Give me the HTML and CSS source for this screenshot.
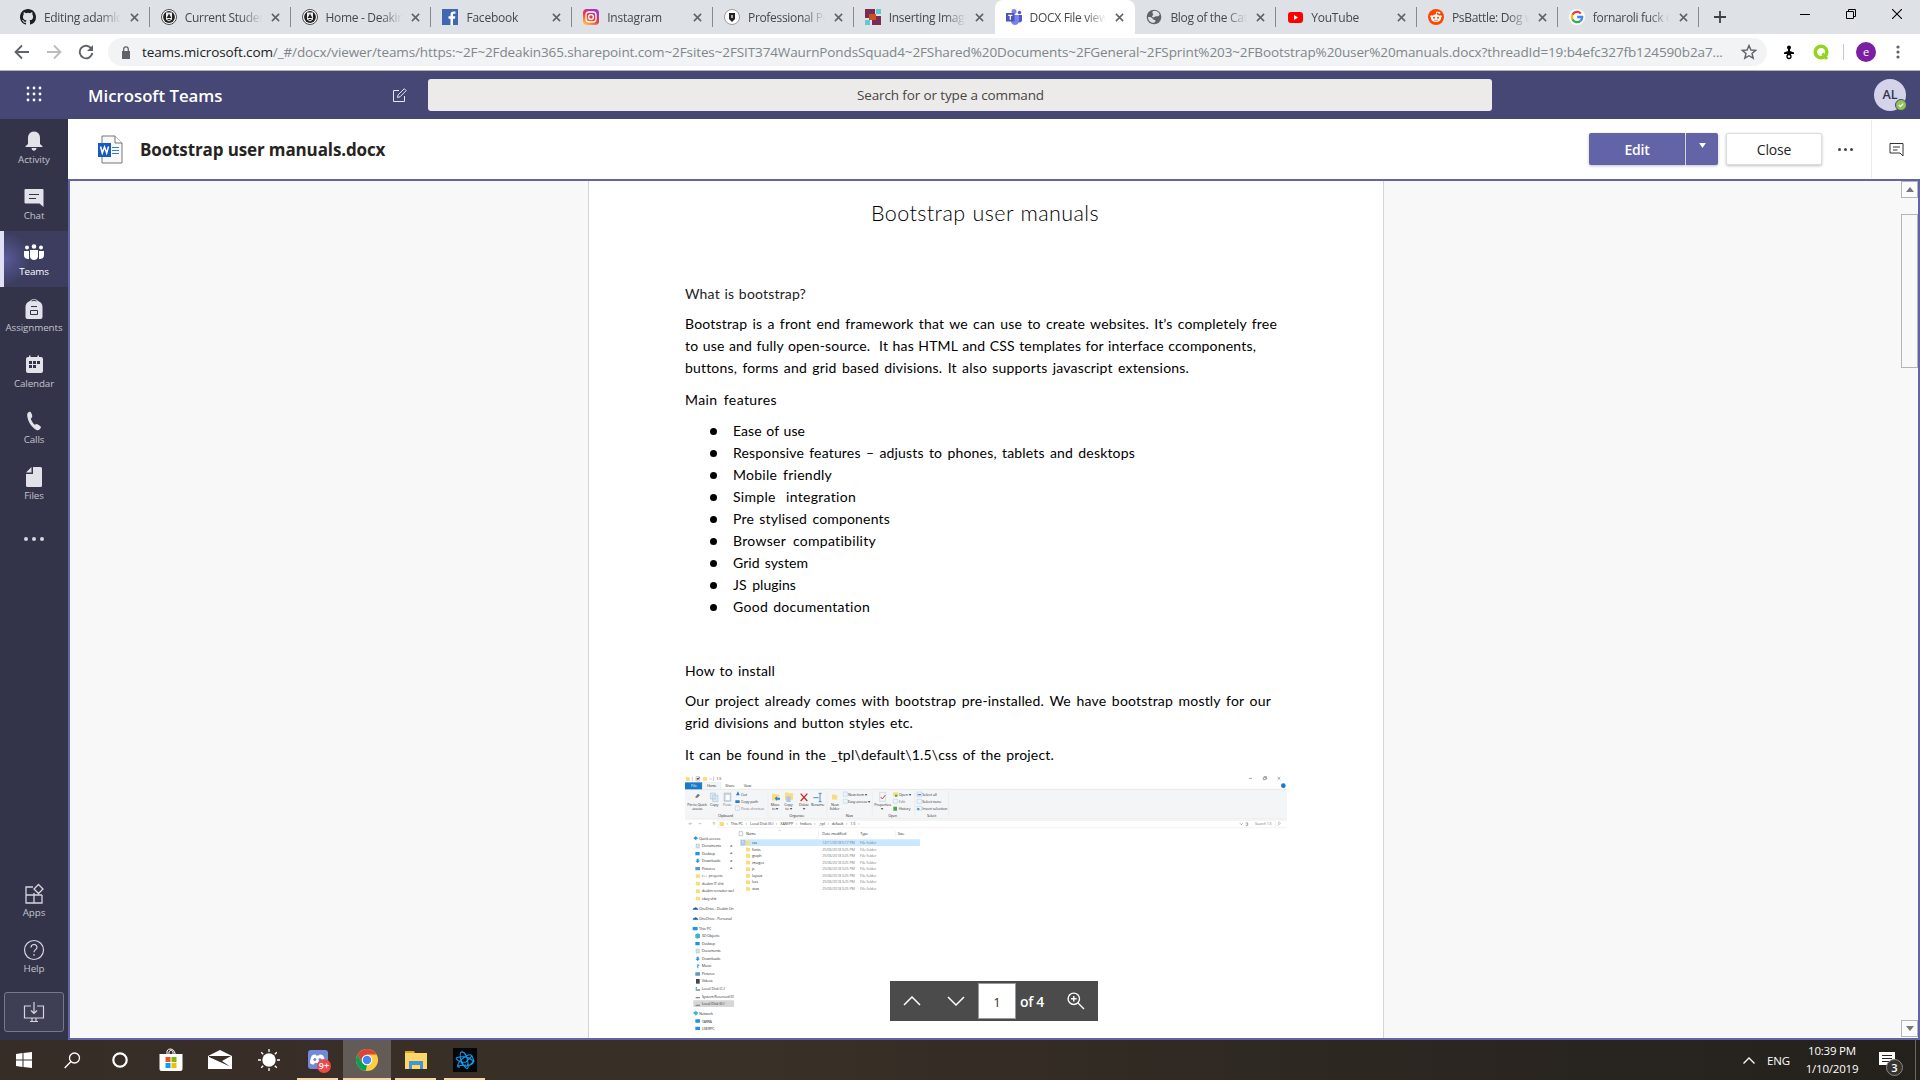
FILE: index.html
```html
<!DOCTYPE html>
<html lang="en">
<head>
<meta charset="utf-8">
<title>DOCX File viewer | Microsoft Teams</title>
<link rel="stylesheet" href="styles.css">
</head>
<body>
<svg width="0" height="0" class="defs">
  <symbol id="x" viewBox="0 0 10 10"><path d="M1 1l8 8M9 1l-8 8" stroke="#5f6368" stroke-width="1.700"/></symbol>
  <symbol id="deakin" viewBox="0 0 16 16"><circle cx="8" cy="8" r="7.500" fill="#fff" stroke="#222" stroke-width=".8"/><circle cx="8" cy="8" r="5.900" fill="#222"/><path d="M5 3.500h6v7l-3 2-3-2z" fill="#eee"/><path d="M8 4.500l2.300 4.500H5.700zM6 10h4l-2 1.500z" fill="#222"/></symbol>
  <symbol id="folder" viewBox="0 0 12 12"><path d="M0 1h5l1 1h6v10H0z" fill="#fbdc7c"/></symbol>
</svg>
<div class="screen">
  <div class="tabs">
    <div class="tab"><svg class="fav" viewBox="0 0 16 16"><path fill="#1b1f23" d="M8 0C3.580 0 0 3.580 0 8c0 3.540 2.290 6.530 5.470 7.590.4.070.55-.17.55-.38v-1.490c-2.010.37-2.530-.49-2.690-.94-.09-.23-.48-.94-.82-1.130-.28-.15-.68-.52-.01-.53.63-.01 1.080.58 1.230.82.720 1.210 1.870.87 2.330.66.070-.52.280-.87.510-1.070-1.780-.2-3.640-.89-3.640-3.950 0-.87.310-1.590.82-2.150-.08-.2-.36-1.020.08-2.120 0 0 .67-.21 2.200.82a7.400 7.400 0 0 1 4 0c1.530-1.040 2.200-.82 2.200-.82.440 1.100.160 1.920.080 2.120.51.560.82 1.270.82 2.150 0 3.070-1.870 3.750-3.650 3.950.29.250.54.730.54 1.480v2.200c0 .21.150.46.550.38A8 8 0 0 0 16 8c0-4.420-3.580-8-8-8z"/></svg><span>Editing adamlo</span><svg class="x"><use href="#x"/></svg></div>
    <div class="tab"><svg class="fav"><use href="#deakin"/></svg><span>Current Studen</span><svg class="x"><use href="#x"/></svg></div>
    <div class="tab"><svg class="fav"><use href="#deakin"/></svg><span>Home - Deakin</span><svg class="x"><use href="#x"/></svg></div>
    <div class="tab"><svg class="fav" viewBox="0 0 16 16"><path fill="#4267b2" d="M0 0h16v16H0z"/><path fill="#fff" d="M8.500 16V9.800H6.500V7.300h2V5.500c0-2 1.200-3.100 3-3.100l1.900.1v2.200h-1.300c-1 0-1.100.5-1.100 1.200v1.400h2.300l-.3 2.500h-2V16z"/></svg><span class="full">Facebook</span><svg class="x"><use href="#x"/></svg></div>
    <div class="tab"><svg class="fav" viewBox="0 0 16 16"><defs><linearGradient id="ig" x1="0.200" y1="1" x2="0.800" y2="0"><stop offset="0" stop-color="#fdc447"/><stop offset=".45" stop-color="#f3393d"/><stop offset="1" stop-color="#8f35d6"/></linearGradient></defs><rect width="16" height="16" rx="4" fill="url(#ig)"/><rect x="3" y="3" width="10" height="10" rx="3" fill="none" stroke="#fff" stroke-width="1.300"/><circle cx="8" cy="8" r="2.400" fill="none" stroke="#fff" stroke-width="1.300"/></svg><span class="full">Instagram</span><svg class="x"><use href="#x"/></svg></div>
    <div class="tab"><svg class="fav" viewBox="0 0 16 16"><circle cx="8" cy="8" r="7.500" fill="#fff" stroke="#888" stroke-width=".8"/><path d="M5 4h6v6l-3 3-3-3z" fill="#222"/><path d="M7 6h2v3H7z" fill="#aaa"/></svg><span>Professional Po</span><svg class="x"><use href="#x"/></svg></div>
    <div class="tab last"><svg class="fav" viewBox="0 0 16 16"><path fill="#7b2a54" d="M0 0h10v9H0zM7 7h9v9H7z"/><path fill="#63c9d0" d="M11 0h5v5h-5zM0 11h5v5H0z"/><path fill="#c9531f" d="M4 5h7v6H4z"/></svg><span>Inserting Image</span><svg class="x"><use href="#x"/></svg></div>
    <div class="tab active"><svg class="fav" viewBox="0 0 16 16"><circle cx="8" cy="2.500" r="2.500" fill="#7b83eb"/><circle cx="13.500" cy="3.500" r="1.700" fill="#5059c9"/><path fill="#5059c9" d="M11 6h5v5c0 2-2 3-4 2z"/><path fill="#7b83eb" d="M5 6h8v6c0 5-7 5-8 1z"/><path fill="#4b53bc" d="M0 4h8.500v8.500H0z"/><path stroke="#fff" stroke-width="1.300" fill="none" d="M2.200 6.300h4.200M4.300 6.300v4.500"/></svg><span>DOCX File viewe</span><svg class="x"><use href="#x"/></svg></div>
    <div class="tab"><svg class="fav" viewBox="0 0 16 16"><circle cx="8" cy="8" r="7.300" fill="#5f6368"/><path fill="#dee1e6" d="M8 1.800c3 .1 5 1.500 5.700 4C12 8 11 7 9.500 7.500S8 9 6.500 8 8 6 7 5 6 2 8 1.800zM2 8c2-.3 4 .2 5 2 .8 1.600 3 .5 2.500 2C9 14 7 14 5.500 13.600 3 12.500 2 10 2 8z"/></svg><span>Blog of the Cat</span><svg class="x"><use href="#x"/></svg></div>
    <div class="tab"><svg class="fav" viewBox="0 0 16 16"><rect x="1" y="3" width="15" height="11" rx="3" fill="#f00"/><path fill="#fff" d="M7 6l4 2.500L7 11z"/></svg><span class="full">YouTube</span><svg class="x"><use href="#x"/></svg></div>
    <div class="tab"><svg class="fav" viewBox="0 0 16 16"><circle cx="8" cy="8" r="8" fill="#ff4500"/><ellipse cx="8" cy="9.300" rx="5" ry="3.700" fill="#fff"/><circle cx="3.500" cy="7.500" r="1.200" fill="#fff"/><circle cx="12.500" cy="7.500" r="1.200" fill="#fff"/><path stroke="#fff" fill="none" d="M8 6l.7-3 2.300.5"/><circle cx="11.300" cy="3.700" r="1" fill="#fff"/><circle cx="6" cy="8.700" r="1" fill="#ff4500"/><circle cx="10" cy="8.700" r="1" fill="#ff4500"/><path stroke="#ff4500" stroke-width=".7" fill="none" d="M6 11q2 1 4 0"/></svg><span>PsBattle: Dog w</span><svg class="x"><use href="#x"/></svg></div>
    <div class="tab"><svg class="fav" viewBox="0 0 16 16"><circle cx="8" cy="8" r="8" fill="#fff"/><g fill="none" stroke-width="2.300"><path stroke="#ea4335" d="M3.400 5.700A5.200 5.200 0 0 1 11.800 4.500"/><path stroke="#fbbc05" d="M3.400 10.300a5.200 5.200 0 0 1 0-4.600"/><path stroke="#34a853" d="M11.500 11.900a5.200 5.200 0 0 1-8.100-1.600"/><path stroke="#4285f4" d="M8.200 8h5a5.200 5.200 0 0 1-1.700 3.900"/></g></svg><span>fornaroli fuck o</span><svg class="x"><use href="#x"/></svg></div>
    <svg class="plus" viewBox="0 0 12 12"><path d="M6 0v12M0 6h12" stroke="#3c4043" stroke-width="1.800"/></svg>
    <div class="winctl">
      <svg viewBox="0 0 10 10"><path d="M0 5.500h10" stroke="#000"/></svg>
      <svg viewBox="0 0 10 10"><path d="M.5 2.500h7v7h-7zM2.500 2.500v-2h7v7h-2" fill="none" stroke="#000"/></svg>
      <svg viewBox="0 0 10 10"><path d="M0 0l10 10M10 0L0 10" stroke="#000" stroke-width="1.100"/></svg>
    </div>
  </div>

  <div class="toolbar">
    <div class="nav">
      <svg viewBox="0 0 16 16"><path d="M15 8H2M8 1.500L1.500 8 8 14.500" fill="none" stroke="#5f6368" stroke-width="1.800"/></svg>
      <svg viewBox="0 0 16 16"><path d="M1 8h13M8 1.500L14.500 8 8 14.500" fill="none" stroke="#babcbe" stroke-width="1.800"/></svg>
      <svg viewBox="0 0 16 16"><path d="M13.300 4.500A6.300 6.300 0 1 0 14.300 9" fill="none" stroke="#5f6368" stroke-width="1.900"/><path d="M15 1v6H9z" fill="#5f6368"/></svg>
    </div>
    <div class="omni">
      <svg class="lock" viewBox="0 0 10 13"><path d="M1 5h8v8H1z" fill="#5f6368"/><path d="M2.700 5V3.200a2.300 2.300 0 0 1 4.600 0V5" fill="none" stroke="#5f6368" stroke-width="1.300"/></svg>
      <span class="url"><b>teams.microsoft.com</b>/_#/docx/viewer/teams/https:~2F~2Fdeakin365.sharepoint.com~2Fsites~2FSIT374WaurnPondsSquad4~2FShared%20Documents~2FGeneral~2FSprint%203~2FBootstrap%20user%20manuals.docx?threadId=19:b4efc327fb124590b2a7...</span>
      <svg class="star" viewBox="0 0 16 16"><path d="M8 1.500l1.900 4.500 4.800.4-3.700 3.100 1.200 4.700L8 11.700l-4.200 2.500L5 9.500 1.300 6.400 6.100 6z" fill="none" stroke="#5f6368" stroke-width="1.400"/></svg>
    </div>
    <div class="ext">
      <svg class="e1" viewBox="0 0 12 16"><circle cx="6" cy="3.500" r="2"/><path d="M5 5h2v2l4 1.500v1.500H8v1H4v-1H1V8.500L5 7z"/><circle cx="6" cy="12.500" r="2" fill="none" stroke="#000" stroke-width="1.300"/></svg>
      <svg class="e2" viewBox="0 0 16 16"><circle cx="8" cy="8" r="5.800" fill="none" stroke="#94d41f" stroke-width="3.600"/><path d="M9.500 9.500L14 15" stroke="#94d41f" stroke-width="3"/></svg>
      <i class="sep"></i><span class="me">e</span>
      <svg class="e3" viewBox="0 0 4 14"><g fill="#5f6368"><circle cx="2" cy="2" r="1.600"/><circle cx="2" cy="7" r="1.600"/><circle cx="2" cy="12" r="1.600"/></g></svg>
    </div>
  </div>

  <header class="app">
    <svg class="waffle" viewBox="0 0 16 16"><g fill="#fff"><circle cx="2" cy="2" r="1.400"/><circle cx="8" cy="2" r="1.400"/><circle cx="14" cy="2" r="1.400"/><circle cx="2" cy="8" r="1.400"/><circle cx="8" cy="8" r="1.400"/><circle cx="14" cy="8" r="1.400"/><circle cx="2" cy="14" r="1.400"/><circle cx="8" cy="14" r="1.400"/><circle cx="14" cy="14" r="1.400"/></g></svg>
    <span class="brand">Microsoft Teams</span>
    <svg class="compose" viewBox="0 0 15 15"><path d="M7 2.500H1.500v11h11V8M5.500 9.500l.6-2.600L12.300.7l1.900 1.900L8 8.800z" fill="none" stroke="#e6e6f0"/></svg>
    <div class="search"><span>Search for or type a command</span></div>
    <div class="avatar">AL<svg viewBox="0 0 12 12"><circle cx="6" cy="6" r="5.500" fill="#92c353" stroke="#464775"/><path d="M3.800 6l1.600 1.600 2.800-3" fill="none" stroke="#fff" stroke-width="1.200"/></svg></div>
  </header>

  <div class="main">
    <nav class="rail">
      <div class="item"><svg viewBox="0 0 22 22"><path fill="#e2e2ea" d="M11 1.500c4 0 6 3 6 6.500v6l2.500 2.200v.8h-17v-.8L5 14V8c0-3.500 2-6.500 6-6.500zM8.500 18h5c-.3 3.500-4.700 3.500-5 0z"/></svg><span>Activity</span></div>
      <div class="item"><svg viewBox="0 0 22 22"><path fill="#e2e2ea" d="M2.500 3h17a1 1 0 0 1 1 1v17l-4-3.500H2.500a1 1 0 0 1-1-1V4a1 1 0 0 1 1-1z"/><path stroke="#33344a" d="M6 8.500h10M6 12.500h7"/></svg><span>Chat</span></div>
      <div class="item on"><svg viewBox="0 0 22 22"><g fill="#fff"><circle cx="4" cy="5.500" r="2"/><circle cx="11" cy="4.500" r="2.300"/><circle cx="18" cy="5.500" r="2"/><path d="M1 9h5v8c-3 0-5-1-5-4zM16 9h5v4c0 3-2 4-5 4zM7 8h8v6.500c0 4.500-8 4.500-8 0z"/></g></svg><span>Teams</span></div>
      <div class="item"><svg viewBox="0 0 22 22"><path fill="#e2e2ea" d="M7 3c1-2.500 7-2.500 8 0 3 1 4.500 3 4.500 6v10a2 2 0 0 1-2 2h-13a2 2 0 0 1-2-2V9c0-3 1.500-5 4.500-6z"/><path fill="none" stroke="#33344a" d="M8 8.500h6M7.500 12.500h7v4h-7zM8.500 3q2.500-1.500 5 0"/></svg><span>Assignments</span></div>
      <div class="item"><svg viewBox="0 0 22 22"><path fill="#e2e2ea" d="M6 1.500h1.500V3h7V1.500H16V3h2a2 2 0 0 1 2 2v12a2 2 0 0 1-2 2H5a2 2 0 0 1-2-2V5a2 2 0 0 1 2-2h1z"/><path fill="#33344a" d="M6 7h3v3H6zM10 7h3v3h-3zM14 7h3v3h-3zM6 11h3v3H6zM10 11h3v3h-3z"/></svg><span>Calendar</span></div>
      <div class="item"><svg viewBox="0 0 22 22"><path fill="#e2e2ea" d="M7.500 2c1 1 2 3 1.700 5L7.800 8.700c.9 2.500 2 4.300 3.800 6l2.100-.7c1.600.5 3.200 1.500 4.300 3-.4 2.500-2.500 3.700-4.500 3C8 17 4 10 4.200 4.500 4.500 2.500 6 1.500 7.500 2z"/></svg><span>Calls</span></div>
      <div class="item"><svg viewBox="0 0 22 22"><path fill="#e2e2ea" d="M10 1h7.500a1.500 1.500 0 0 1 1.500 1.500v17a1.500 1.500 0 0 1-1.500 1.500h-13A1.500 1.500 0 0 1 3 19.500V8h7zM3 6.500L8.500 1v5.500z"/></svg><span>Files</span></div>
      <div class="more"><i></i><i></i><i></i></div>
      <div class="bottom">
        <div class="item"><svg viewBox="0 0 22 22"><path fill="none" stroke="#d5d5de" stroke-width="1.300" d="M10 4H3v16h16v-8M3 12h16M11 10v10M15.500 1.500l4.500 4.500-4.500 4.500L11 6z"/></svg><span>Apps</span></div>
        <div class="item"><svg viewBox="0 0 22 22"><circle cx="11" cy="11" r="9.500" fill="none" stroke="#d5d5de" stroke-width="1.200"/><path fill="none" stroke="#d5d5de" stroke-width="1.200" d="M8 8.500c0-4 6-4 6-.2 0 2.500-3 2.200-3 5M11 15v1.700"/></svg><span>Help</span></div>
        <div class="download"><svg viewBox="0 0 22 22"><path fill="none" stroke="#d5d5de" stroke-width="1.200" d="M8 5H1.500v12h19V5H14M11 1v11M8 9.500l3 3 3-3M9 17v3M13 17v3M7 20.500h8"/></svg></div>
      </div>
    </nav>

    <section class="work">
      <div class="filebar">
        <svg class="word" viewBox="0 0 26 29"><path fill="#f8f8f8" stroke="#777" d="M5 1h13l7 7v20H5z"/><path fill="#fff" stroke="#777" d="M18 1v7h7"/><path stroke="#2b7cd3" d="M15 12.500h7M15 15.500h7M15 18.500h7"/><path fill="#185abd" d="M1 8h13v14H1z"/><path fill="none" stroke="#fff" stroke-width="1.500" d="M3.500 11.500L5.300 18l2.200-6 2.200 6 1.800-6.500"/></svg>
        <h1>Bootstrap user manuals.docx</h1>
        <div class="actions">
          <button class="edit">Edit</button><button class="drop"><svg viewBox="0 0 8 6"><path fill="#fff" d="M0 0h8L4 6z"/></svg></button>
          <button class="close">Close</button>
          <div class="dots"><i></i><i></i><i></i></div>
          <div class="comment"><svg viewBox="0 0 15 15"><path fill="none" stroke="#333" d="M1 1.500h13V14l-3-3H1zM4 5h7M4 8h4.500"/></svg></div>
        </div>
      </div>

      <div class="viewer">
        <article class="page">
          <h2><span class="ln w227">Bootstrap user manuals</span></h2>
          <p class="l what"><span class="ln w120">What is bootstrap?</span></p>
          <p class="l p1"><span class="ln w592">Bootstrap is a front end framework that we can use to create websites. It’s completely free</span></p>
          <p class="l"><span class="ln w571">to use and fully open-source.&nbsp; It has HTML and CSS templates for interface ccomponents,</span></p>
          <p class="l"><span class="ln w503">buttons, forms and grid based divisions. It also supports javascript extensions.</span></p>
          <p class="l p2"><span class="ln w91">Main features</span></p>
          <ul>
            <li><span class="ln w72">Ease of use</span></li>
            <li><span class="ln w401">Responsive features – adjusts to phones, tablets and desktops</span></li>
            <li><span class="ln w99">Mobile friendly</span></li>
            <li><span class="ln w123">Simple integration</span></li>
            <li><span class="ln w157">Pre stylised components</span></li>
            <li><span class="ln w143">Browser compatibility</span></li>
            <li><span class="ln w75">Grid system</span></li>
            <li><span class="ln w62">JS plugins</span></li>
            <li><span class="ln w137">Good documentation</span></li>
          </ul>
          <p class="l how"><span class="ln w90">How to install</span></p>
          <p class="l p1"><span class="ln w585">Our project already comes with bootstrap pre-installed. We have bootstrap mostly for our</span></p>
          <p class="l"><span class="ln w228">grid divisions and button styles etc.</span></p>
          <p class="l p2"><span class="ln w369">It can be found in the _tpl\default\1.5\css of the project.</span></p>

          <svg class="shot" viewBox="15 15 1806 789">
            <path fill="#f4f5f7" d="M15 61h1806v89H15z"/><path stroke="#e3e4e6" stroke-width="2" d="M15 61h1806M15 150h1806"/>
            <path fill="#1979ca" d="M15 40h52v21H15z"/><path fill="#f4f5f7" stroke="#dedfe1" d="M67 40h56v22H67z"/>
            <use href="#folder" x="17" y="22" width="13" height="14"/><use href="#folder" x="69" y="22" width="13" height="14"/>
            <path stroke="#999" stroke-width="1.500" fill="none" d="M37 23v13M48 23h11v13H48zM101 23v13M88 28l4 4 4-4"/><path stroke="#d84b2b" stroke-width="2" d="M50 29l3 4 6-8"/>
            <g class="t">
              <text x="109" y="33" textLength="15">1.5</text><text x="33" y="55" class="w" textLength="18">File</text><text x="81" y="55" textLength="28">Home</text><text x="136" y="55" textLength="28">Share</text><text x="191" y="55" textLength="23">View</text>
              <text x="22" y="111" textLength="59">Pin to Quick</text><text x="37" y="124" textLength="30">access</text><text x="90" y="111" textLength="25">Copy</text><text x="129" y="111" textLength="26" class="g">Paste</text>
              <text x="183" y="80" textLength="18">Cut</text><text x="183" y="101" textLength="51">Copy path</text><text x="183" y="122" textLength="69" class="g">Paste shortcut</text><text x="114" y="143" textLength="45">Clipboard</text>
              <text x="272" y="111" textLength="27">Move</text><text x="276" y="124" textLength="19">to ▾</text><text x="313" y="111" textLength="25">Copy</text><text x="316" y="124" textLength="19">to ▾</text><text x="357" y="111" textLength="30">Delete</text><text x="368" y="124">▾</text><text x="393" y="111" textLength="40">Rename</text><text x="328" y="143" textLength="45">Organize</text>
              <text x="453" y="111" textLength="23">New</text><text x="449" y="124" textLength="30">folder</text><text x="504" y="80" textLength="56">New item ▾</text><text x="504" y="101" textLength="65">Easy access ▾</text><text x="497" y="143" textLength="22">New</text>
              <text x="583" y="111" textLength="50">Properties</text><text x="604" y="124">▾</text><text x="656" y="80" textLength="37">Open ▾</text><text x="656" y="101" textLength="19" class="g">Edit</text><text x="656" y="122" textLength="35">History</text><text x="625" y="143" textLength="26">Open</text>
              <text x="727" y="80" textLength="43">Select all</text><text x="727" y="101" textLength="57">Select none</text><text x="727" y="122" textLength="75">Invert selection</text><text x="741" y="143" textLength="28">Select</text>
              <text x="140" y="168">›</text><text x="152" y="168" textLength="37">This PC</text><text x="197" y="168">›</text><text x="210" y="168" textLength="70">Local Disk (E:)</text><text x="288" y="168">›</text><text x="301" y="168" textLength="39">XAMPP</text><text x="348" y="168">›</text><text x="360" y="168" textLength="35">htdocs</text><text x="403" y="168">›</text><text x="416" y="168" textLength="19">_tpl</text><text x="443" y="168">›</text><text x="455" y="168" textLength="35">default</text><text x="498" y="168">›</text><text x="511" y="168" textLength="15">1.5</text><text x="535" y="168">›</text><text x="1725" y="168" textLength="50" class="g">Search 1.5</text>
              <text x="57" y="212" textLength="64">Quick access</text><text x="65" y="234" textLength="58">Documents</text><text x="65" y="257" textLength="40">Desktop</text><text x="65" y="279" textLength="56">Downloads</text><text x="65" y="302" textLength="40">Pictures</text><text x="65" y="325" textLength="63">c++ projects</text><text x="65" y="347" textLength="66">deakin IT shit</text><text x="65" y="370" textLength="97">deakin recruiter wel</text><text x="65" y="392" textLength="44">ebay shit</text><text x="57" y="423" textLength="104">OneDrive - Deakin Un</text><text x="57" y="453" textLength="98">OneDrive - Personal</text><text x="57" y="483" textLength="37">This PC</text><text x="65" y="505" textLength="53">3D Objects</text><text x="65" y="528" textLength="40">Desktop</text><text x="65" y="550" textLength="57">Documents</text><text x="65" y="573" textLength="56">Downloads</text><text x="65" y="595" textLength="30">Music</text><text x="65" y="618" textLength="39">Pictures</text><text x="65" y="640" textLength="33">Videos</text><text x="65" y="663" textLength="70">Local Disk (C:)</text><text x="65" y="686" textLength="97">System Reserved (D</text>
            </g>
            <path fill="#d6d6d6" d="M40 694h122v20H40z"/>
            <g class="t"><text x="65" y="709" textLength="68">Local Disk (E:)</text><text x="57" y="738" textLength="42">Network</text><text x="65" y="761" textLength="31">TARRA</text><text x="65" y="783" textLength="39">USERPC</text></g>
            <path fill="#cce8ff" d="M180 211h540v20H180z"/>
            <g class="t">
              <text x="198" y="198" textLength="30">Name</text><text x="427" y="198" textLength="72">Date modified</text><text x="541" y="198" textLength="23">Type</text><text x="653" y="198" textLength="20">Size</text>
              <text x="216" y="225" textLength="15">css</text><text x="216" y="245" textLength="26">fonts</text><text x="216" y="264" textLength="29">graph</text><text x="216" y="284" textLength="36">images</text><text x="216" y="304" textLength="7">js</text><text x="216" y="324" textLength="31">layout</text><text x="216" y="343" textLength="18">less</text><text x="216" y="363" textLength="21">view</text>
              <g class="g"><text x="427" y="225" textLength="98">12/11/2018 5:17 PM</text><text x="427" y="245" textLength="98">25/06/2018 3:25 PM</text><text x="427" y="264" textLength="98">25/06/2018 3:25 PM</text><text x="427" y="284" textLength="98">25/06/2018 3:25 PM</text><text x="427" y="304" textLength="98">25/06/2018 3:25 PM</text><text x="427" y="324" textLength="98">25/06/2018 3:25 PM</text><text x="427" y="343" textLength="98">25/06/2018 3:25 PM</text><text x="427" y="363" textLength="98">25/06/2018 3:25 PM</text>
              <text x="540" y="225" textLength="50">File folder</text><text x="540" y="245" textLength="50">File folder</text><text x="540" y="264" textLength="50">File folder</text><text x="540" y="284" textLength="50">File folder</text><text x="540" y="304" textLength="50">File folder</text><text x="540" y="324" textLength="50">File folder</text><text x="540" y="343" textLength="50">File folder</text><text x="540" y="363" textLength="50">File folder</text></g>
            </g>
            <g fill="none" stroke="#999" stroke-width="1.500"><path d="M177 188h11v12h-11zM184 215h11v12h-11zM186 221l3 3 5-7M27 164h10M31 160l-4 4 4 4M56 164h9M102 169v-9M98 164l4-4 4 4M296 185l3-2 3 2"/><path stroke="#e4e4e4" d="M114 154h1672v22H114zM1796 154h94v22h-94zM415 184v20M534 184v20M646 184v20M720 184v20M264 66v78M441 66v78M577 66v78M704 66v78M806 66v78"/></g>
            <path stroke="#777" stroke-width="2" fill="none" d="M1707 28h9M1750 25h8v7h-8zM1752 23h8v7M1793 24l8 8M1801 24l-8 8M1680 163l4 4 4-4M1697 162h6v7h-6"/><circle cx="1810" cy="50" r="7" fill="#1979ca"/><circle cx="1798" cy="163" r="3" fill="none" stroke="#777"/><path stroke="#777" d="M1796 166l-4 4"/>
            <path fill="#777" d="M45 85l9-11 6 5-9 8zM150 231l5-3 3 3-6 3zM150 253l5-3 3 3-6 3zM150 276l5-3 3 3-6 3zM150 298l5-3 3 3-6 3z"/>
            <path fill="#d7e8f7" stroke="#8aa9c6" d="M91 72h15v18H91zM98 78h16v20H98z"/><path fill="#c9d6e4" stroke="#8e9fb3" d="M132 72h21v25h-21z"/><path fill="#fff" d="M137 78h12v15h-12z"/>
            <path fill="#2a7dc4" d="M168 79l6-12 5 12zM166 94h13v8h-13z"/><path fill="none" stroke="#9ab" d="M166 111h12v13h-12z"/>
            <use href="#folder" x="276" y="70" width="22" height="27"/><path fill="#2a86d0" d="M284 88l7-6v4h9v6h-9v4z"/><use href="#folder" x="315" y="68" width="24" height="25"/><path fill="#a9cbe8" d="M319 82h13v17h-13z"/>
            <path stroke="#d7261e" stroke-width="4" d="M362 74l20 22M382 74l-20 22"/><path stroke="#4e8dc5" stroke-width="3" fill="none" d="M400 86h16M420 73v25M416 73h9M416 98h9"/><use href="#folder" x="456" y="70" width="16" height="27"/>
            <path fill="#f0f5fa" stroke="#8eb3d5" d="M490 69h12v13h-12zM490 91h12v12h-12zM599 70h18v27h-18zM711 69h14v14h-14zM711 91h14v12h-14zM711 112h14v12h-14zM640 91h12v12h-12z"/><path stroke="#d84b2b" stroke-width="3" fill="none" d="M602 84l5 6 9-12"/><path fill="#3e92d9" d="M713 75h10v4h-10zM712 117h6v6h-6z"/><path fill="#fbdc7c" d="M639 70h15v12h-15z"/><path fill="#48a94b" d="M645 77h7v6h-7zM640 113h11v12h-11z"/>
            <use href="#folder" x="118" y="156" width="14" height="16"/>
            <use href="#folder" x="198" y="214" width="13" height="14"/><use href="#folder" x="198" y="234" width="13" height="14"/><use href="#folder" x="198" y="253" width="13" height="14"/><use href="#folder" x="198" y="273" width="13" height="14"/><use href="#folder" x="198" y="293" width="13" height="14"/><use href="#folder" x="198" y="313" width="13" height="14"/><use href="#folder" x="198" y="332" width="13" height="14"/><use href="#folder" x="198" y="352" width="13" height="14"/>
            <use href="#folder" x="47" y="314" width="13" height="14"/><use href="#folder" x="47" y="336" width="13" height="14"/><use href="#folder" x="47" y="359" width="13" height="14"/><use href="#folder" x="47" y="381" width="13" height="14"/>
            <g fill="#2195e3"><path d="M40 208l7-6 7 6-7 5zM46 249h13v10H46zM46 519h13v10H46zM38 474h15v10H38zM50 269h6v6h4l-7 7-7-7h4zM50 563h6v6h4l-7 7-7-7h4zM52 586h3l4 5-4-1v8h-3z"/><path fill="#0a64b5" d="M38 422q0-5 5-5 4-5 8 1 4 0 4 4zM38 452q0-5 5-5 4-5 8 1 4 0 4 4z"/><path fill="#41b1cf" d="M46 496l7-3 7 3v10l-7 3-7-3zM39 731l8-5 8 5-7 9z"/><path d="M46 751h14v10H46zM46 773h14v10H46z"/></g>
            <path fill="#cfe2f1" stroke="#8aa9c6" d="M48 225h10v12H48zM48 540h10v12H48z"/><path fill="#5d98c4" d="M46 294h14v10H46zM46 610h14v10H46z"/><path fill="#444" d="M48 630h11v14H48z"/><path fill="#888" d="M47 661h13v4H47zM47 684h13v4H47zM47 707h13v4H47z"/><path fill="#30a6d8" d="M47 654h4v5h-4z"/>
          </svg>
        </article>

        <div class="pager">
          <svg class="chev" viewBox="0 0 18 10"><path d="M1 9l8-8 8 8" fill="none" stroke="#fff" stroke-width="1.500"/></svg>
          <svg class="chev" viewBox="0 0 18 10"><path d="M1 1l8 8 8-8" fill="none" stroke="#fff" stroke-width="1.500"/></svg>
          <span class="num">1</span><span class="of">of 4</span>
          <svg class="zoom" viewBox="0 0 18 18"><circle cx="6.800" cy="6.800" r="5.700" fill="none" stroke="#fff" stroke-width="1.400"/><path d="M11 11l6 6M4 6.800h5.600M6.800 4v5.600" stroke="#fff" stroke-width="1.400"/></svg>
        </div>

        <div class="scroll">
          <div class="sb"><svg viewBox="0 0 8 5"><path fill="#777" d="M0 5h8L4 0z"/></svg></div>
          <div class="thumb"></div>
          <div class="sb end"><svg viewBox="0 0 8 5"><path fill="#777" d="M0 0h8L4 5z"/></svg></div>
        </div>
      </div>
    </section>
  </div>

  <footer class="taskbar">
    <div class="sys"><svg width="16" height="16" viewBox="0 0 16 16"><path fill="#fff" d="M0 2l6.500-1v6.500H0zM7.500.9L16 0v7.500H7.500zM0 8.500h6.500V15L0 14zM7.500 8.500H16V16l-8.500-1z"/></svg></div>
    <div class="sys"><svg width="17" height="17" viewBox="0 0 17 17"><circle cx="10.500" cy="6" r="5" fill="none" stroke="#fff" stroke-width="1.300"/><path d="M7 9.500L.7 16" stroke="#fff" stroke-width="1.400"/></svg></div>
    <div class="sys"><svg width="16" height="16" viewBox="0 0 16 16"><circle cx="8" cy="8" r="6.700" fill="none" stroke="#fff" stroke-width="2.200"/></svg></div>
    <div class="tk first"><svg width="24" height="24" viewBox="0 0 24 24"><path d="M8 7V3q1-2.500 4-2t4 4v2M10 7V4q2-4 4 0v3" fill="none" stroke="#fff"/><path d="M.5 6h23v15q0 2-2 2H2.500q-2 0-2-2z" fill="#fff"/><path fill="#f25022" d="M6.500 9h5v5h-5z"/><path fill="#7fba00" d="M12.500 9h5v5h-5z"/><path fill="#00a4ef" d="M6.500 15h5v5h-5z"/><path fill="#ffb900" d="M12.500 15h5v5h-5z"/></svg></div>
    <div class="tk"><svg width="24" height="20" viewBox="0 0 24 20"><path d="M0 6l12-6 12 6v13H0z" fill="#fff"/><path d="M1 6h22l-9 5 8 5.500L1 7z" fill="#383028"/></svg></div>
    <div class="tk"><svg width="24" height="24" viewBox="0 0 24 24"><circle cx="12" cy="12" r="6.700" fill="#fff"/><path d="M12 1v3M12 20v3M1 12h3M20 12h3M4.200 4.200l2 2M17.800 17.800l2 2M19.800 4.200l-2 2M6.200 17.800l-2 2" stroke="#fff" stroke-width="1.300"/></svg></div>
    <div class="tk run"><svg width="24" height="24" viewBox="0 0 24 24"><rect x="2" y="2" width="20" height="19" rx="3" fill="#7289da"/><path d="M4 15c0-3 .8-6 2-7.500 1.500-1 3-1.300 3.500-1l.5 1h3l.5-1c1 0 2.500.3 3.500 1 1.200 1.500 2 4.500 2 7.500-1 1.300-2.500 1.500-3.500 1.500l-1-1.500H9l-1 1.500C6.500 16.500 5 16 4 15z" fill="#fff"/><circle cx="8.800" cy="11.500" r="1.500" fill="#7289da"/><circle cx="14" cy="11.500" r="1.500" fill="#7289da"/></svg><em>9+</em></div>
    <div class="tk run cur"><svg width="24" height="24" viewBox="0 0 24 24"><circle cx="12" cy="12" r="11" fill="#ffcd40"/><path fill="#db4437" d="M2.500 6.500A11 11 0 0 1 21.500 6.500H12L7.200 14.800z"/><path fill="#0f9d58" d="M2.500 6.500l4.700 8.300L12 17.500 10.700 23A11 11 0 0 1 2.500 6.500z"/><circle cx="12" cy="12" r="5.300" fill="#fff"/><circle cx="12" cy="12" r="4.200" fill="#4285f4"/></svg></div>
    <div class="tk run"><svg width="24" height="24" viewBox="0 0 24 24"><path fill="#e8a317" d="M1 3h9l1 2H1z"/><path fill="#ffd766" d="M1 5h22v16H1z"/><path fill="#3e97db" d="M5 13h14v8h-3v-4H8v4H5z"/></svg></div>
    <div class="tk run"><svg width="24" height="24" viewBox="0 0 24 24"><path d="M0 0h24v24H0z" fill="#050608"/><path fill="none" stroke="#0f9cf0" stroke-width="1.100" d="M8 4c4-1 7 6 7 12-1 4-5 2-7-2M8 4c-2 3 0 9 3 14 3 4 5 3 4-3M3 10c5-2 12-2 16 2 3 3 0 5-4 5M3 10c1 3 5 5 10 4l6-6c-2-3-7 0-12 5-3 4-3 7 0 6M19 8l2 5-5 5M4 18l9-1"/></svg></div>
    <div class="tray">
      <svg class="up" viewBox="0 0 12 7"><path d="M.5 6.500L6 1l5.500 5.500" fill="none" stroke="#fff" stroke-width="1.300"/></svg>
      <span class="eng">ENG</span>
      <div class="clock"><span>10:39 PM</span><span>1/10/2019</span></div>
      <div class="note"><svg viewBox="0 0 16 16"><path fill="#fff" d="M0 0h16v13h-4v3l-3-3H0z"/><path stroke="#26221e" d="M3 3.500h10M3 6.500h10M3 9.500h7"/></svg><em>3</em></div>
    </div>
  </footer>
</div>
</body>
</html>
```
FILE: styles.css
```css
* { box-sizing: border-box; }
body { margin: 0; font-family: "Open Sans", "Noto Sans", sans-serif; overflow: hidden; }
svg { display: block; flex: none; }
.defs { position: absolute; }
em, i { font-style: normal; }
.screen { width: 1920px; height: 1080px; display: flex; flex-direction: column; }

/* browser tabs */
.tabs { height: 34px; background: #dee1e6; display: flex; align-items: center; padding-left: 9px; flex: none; }
.tab { width: 140.800px; height: 34px; display: flex; align-items: center; padding-left: 11px; flex: none; }
.tab::after { content: ""; width: 1px; height: 20px; background: #868a90; margin-left: 10px; }
.tab.last::after, .tab.active::after { visibility: hidden; }
.tab.active { background: #fff; border-radius: 8px 8px 0 0; }
.fav { width: 16px; height: 16px; }
.tab span { width: 78px; margin-left: 8px; font-size: 12px; letter-spacing: -.32px; color: #45494d; white-space: nowrap; overflow: hidden; -webkit-mask-image: linear-gradient(90deg, #000 72%, transparent); mask-image: linear-gradient(90deg, #000 72%, transparent); }
.tab span.full { letter-spacing: -.2px; }
.x { width: 9px; height: 9px; margin-left: 9px; }
.plus { width: 12px; height: 12px; margin-left: 15px; }
.winctl { margin-left: auto; display: flex; gap: 36px; padding: 0 18px 6px 0; }
.winctl svg { width: 10px; height: 10px; }

/* address bar */
.toolbar { height: 37px; background: #fff; border-bottom: 1px solid #b6b4b6; display: flex; align-items: center; flex: none; }
.nav { display: flex; gap: 16px; padding-left: 14px; width: 108px; }
.nav svg { width: 16px; height: 16px; }
.omni { width: 1659px; height: 28px; border-radius: 14px; background: #f1f3f4; display: flex; align-items: center; padding-left: 13px; }
.lock { width: 10px; height: 13px; }
.url { margin-left: 11px; width: 1588px; font-size: 13.500px; white-space: nowrap; color: #80868b; letter-spacing: -.11px; }
.url b { font-weight: 400; color: #202124; }
.star { width: 16px; height: 16px; margin-left: 11px; }
.ext { display: flex; align-items: center; margin-left: 16px; }
.e1 { width: 12px; height: 16px; }
.e2 { width: 16px; height: 16px; margin-left: 18px; }
.sep { width: 1px; height: 16px; background: #c6c8cb; margin: 0 12px 0 14px; }
.me { width: 20px; height: 20px; border-radius: 50%; background: #7b1fa2; color: #fff; font-size: 11px; line-height: 19px; text-align: center; }
.e3 { width: 4px; height: 14px; margin-left: 20px; }

/* Teams header */
.app { height: 48px; background: #464775; display: flex; align-items: center; padding-left: 26px; flex: none; color: #fff; }
.waffle { width: 16px; height: 16px; margin-top: -2px; }
.brand { margin-left: 46px; width: 304px; font-size: 16.800px; font-weight: 600; letter-spacing: 0; }
.compose { width: 15px; height: 15px; }
.search { width: 1064px; height: 32px; margin-left: 21px; background: #ecebe9; border-radius: 3px; color: #484644; font-size: 13.500px; letter-spacing: -.13px; line-height: 32px; padding-left: 429px; white-space: nowrap; }
.avatar { width: 32px; height: 32px; border-radius: 50%; background: #d5d3e9; color: #33344a; font-size: 12.500px; font-weight: 600; line-height: 32px; text-align: center; margin-left: 382px; position: relative; }
.avatar svg { position: absolute; right: -1px; bottom: 0; width: 12px; height: 12px; }

.main { height: 921px; display: flex; flex: none; }
.rail { width: 68px; background: #33344a; display: flex; flex-direction: column; color: #c3c3cd; flex: none; }
.item { height: 56px; display: flex; flex-direction: column; align-items: center; padding-top: 11px; font-size: 9.800px; letter-spacing: -.1px; line-height: 14px; }
.item svg { width: 22px; height: 22px; margin-bottom: 1px; }
.item.on { background: radial-gradient(circle at 4px 28px, #5a5b9b 0, #3d3e5f 26px); box-shadow: inset 4px 0 #dfdff5; color: #fff; }
.more { display: flex; gap: 4px; justify-content: center; padding-top: 26px; }
.more i { width: 4px; height: 4px; border-radius: 50%; background: #d5d5de; }
.bottom { margin-top: auto; padding-bottom: 8px; }
.download { width: 60px; height: 40px; margin: 8px 4px 0; border: 1px solid #77788a; border-radius: 3px; background: #3e3f55; display: flex; align-items: center; justify-content: center; }
.download svg { width: 22px; height: 22px; }

/* file title row */
.work { flex: 1; display: flex; flex-direction: column; }
.filebar { height: 60px; background: #fff; display: flex; align-items: center; padding-left: 29px; }
.word { width: 26px; height: 29px; }
h1 { margin: 0 0 0 17px; font-size: 17px; font-weight: 700; color: #252423; letter-spacing: -.12px; white-space: nowrap; }
.actions { margin-left: auto; display: flex; align-items: center; height: 60px; }
button { height: 32px; border: 0; padding: 0; font: 600 14px "Open Sans", sans-serif; letter-spacing: -.2px; box-shadow: 0 1px 3px rgba(0,0,0,.25); }
.edit { width: 96px; background: #6264a7; color: #fff; border-radius: 2px 0 0 2px; }
.drop { width: 32px; margin-left: 1px; background: #6264a7; border-radius: 0 2px 2px 0; }
.drop svg { width: 7px; height: 5px; margin: -6px auto 0; }
.close { width: 96px; margin-left: 8px; background: #fff; border: 1px solid #dcdcdc; border-radius: 2px; color: #252423; font-weight: 400; }
.dots { display: flex; gap: 3px; width: 49px; padding-left: 16px; }
.dots i { width: 3px; height: 3px; border-radius: 50%; background: #444; }
.comment { width: 49px; height: 58px; border-left: 1px solid #ececec; display: flex; align-items: center; padding-left: 17px; }
.comment svg { width: 15px; height: 15px; }

/* document viewer */
.viewer { height: 861px; border: 2px solid #6264a7; background: #f8f8f8; position: relative; padding-left: 518px; overflow: hidden; }
.page { width: 796px; height: 857px; background: #fff; border: solid #d4d4d4; border-width: 0 1px; padding: 18px 0 0 96px; font-family: Lato, "Open Sans", sans-serif; color: #000; overflow: hidden; }
.ln { display: block; text-align: justify; text-align-last: justify; height: 22px; }
h2 { margin: 0 0 0 186px; font-size: 21.500px; font-weight: 300; line-height: 28px; height: 28px; letter-spacing: .42px; }
.l, ul { margin: 0; font-size: 14px; line-height: 22px; letter-spacing: .18px; }
.l { height: 22px; }
.what { margin-top: 56px; color: #222; }
.p1 { margin-top: 8px; }
.p2 { margin-top: 10px; }
ul { list-style: none; padding: 9px 0 0 48px; }
li { height: 22px; position: relative; }
li::before { content: ""; position: absolute; left: -23px; top: 8px; width: 7px; height: 7px; border-radius: 50%; background: #000; }
.how { margin-top: 42px; }
.w227 { width: 228px; } .w120 { width: 121px; } .w592 { width: 592px; } .w571 { width: 571px; } .w503 { width: 504px; } .w91 { width: 92px; letter-spacing: .4px; }
.w72 { width: 72px; letter-spacing: .05px; } .w401 { width: 402px; } .w99 { width: 99px; letter-spacing: .25px; } .w123 { width: 123px; letter-spacing: .3px; } .w157 { width: 157px; } .w143 { width: 143px; letter-spacing: .3px; } .w75 { width: 75px; letter-spacing: .05px; } .w62 { width: 63px; letter-spacing: .05px; } .w137 { width: 137px; letter-spacing: .3px; }
.w90 { width: 90px; } .w585 { width: 586px; } .w228 { width: 228px; } .w369 { width: 369px; }
.shot { width: 602px; height: 263px; margin-top: 8px; }
.t { font: 11.500px "Open Sans", sans-serif; fill: #333; }
.t .g { fill: #808080; }
.t .w { fill: #fff; }

.pager { position: absolute; left: 820px; top: 800px; width: 208px; height: 40px; background: #4b4b4b; display: flex; align-items: center; color: #fff; font-size: 14px; }
.chev { width: 18px; height: 10px; margin-left: 13px; }
.chev + .chev { margin-left: 26px; }
.num { width: 38px; height: 36px; margin-left: 13px; background: #fff; border: 1px solid #999; color: #333; text-align: center; line-height: 36px; font-size: 13px; }
.of { margin-left: 4px; width: 47px; font-weight: 600; letter-spacing: -.3px; }
.zoom { width: 18px; height: 18px; }
.scroll { position: absolute; right: 0; top: 0; width: 17px; height: 856px; display: flex; flex-direction: column; }
.sb { width: 17px; height: 17px; border: 1px solid #b5b5b5; background: #fbfbfb; display: flex; align-items: center; justify-content: center; }
.sb svg { width: 8px; height: 5px; }
.thumb { height: 154px; margin-top: 16px; border: 1px solid #b5b5b5; background: #f8f8f8; }
.sb.end { margin-top: auto; }

/* Windows taskbar */
.taskbar { height: 40px; flex: none; display: flex; background: linear-gradient(90deg, #372d27 0, #393027 40%, #2b2621 75%, #24211c); color: #fff; }
.sys, .tk { width: 48px; height: 40px; display: flex; align-items: center; justify-content: center; position: relative; }
.tk { width: 49px; }
.tk.first { margin-left: 2px; }
.run::after { content: ""; position: absolute; bottom: 0; left: 4px; width: 41px; height: 2px; background: #f8d7a4; }
.cur::before { content: ""; position: absolute; inset: 0 0 0 1px; background: #625b56; }
.cur::after { left: 1px; width: 48px; }
.cur svg { position: relative; }
.tk em { position: absolute; left: 24px; top: 19px; width: 14px; height: 14px; border-radius: 50%; background: #f04747; font-size: 9px; font-weight: 600; line-height: 14px; text-align: center; }
.tray { margin-left: auto; width: 177px; display: flex; align-items: center; font-size: 12px; }
.up { width: 12px; height: 7px; }
.eng { margin-left: 12px; width: 24px; font-size: 11.500px; letter-spacing: -.2px; }
.clock { width: 54px; margin-left: 14px; display: flex; flex-direction: column; text-align: center; line-height: 18px; font-size: 11.500px; letter-spacing: -.2px; white-space: nowrap; align-items: center; }
.note { width: 60px; height: 40px; padding: 12px 0 0 20px; position: relative; }
.note::after { content: ""; position: absolute; right: 3px; top: 0; width: 1px; height: 40px; background: #6b6763; }
.note svg { width: 16px; height: 16px; }
.note em { position: absolute; left: 27px; top: 19px; width: 17px; height: 17px; border: 1px solid #8b8784; border-radius: 50%; background: #37332f; font-size: 11px; font-weight: 600; line-height: 15px; text-align: center; }
```
